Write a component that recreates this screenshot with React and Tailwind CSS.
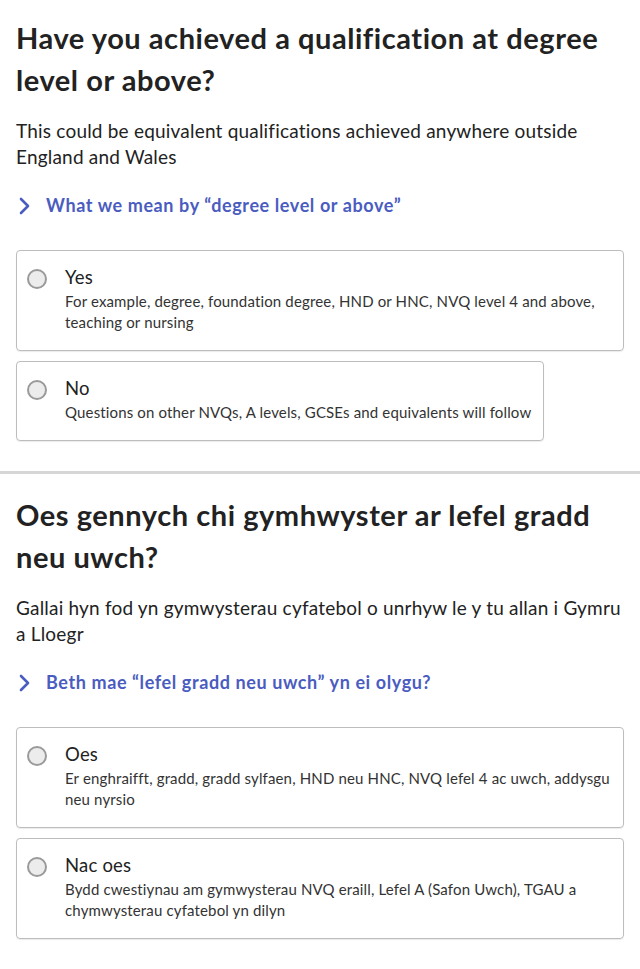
import React from 'react';

const sections = [
  {
    title: 'Have you achieved a qualification at degree level or above?',
    hint: 'This could be equivalent qualifications achieved anywhere outside England and Wales',
    more: 'What we mean by \u201cdegree level or above\u201d',
    options: [
      { label: 'Yes', desc: 'For example, degree, foundation degree, HND or HNC, NVQ level 4 and above, teaching or nursing' },
      { label: 'No', desc: 'Questions on other NVQs, A levels, GCSEs and equivalents will follow' },
    ],
  },
  {
    title: 'Oes gennych chi gymhwyster ar lefel gradd neu uwch?',
    hint: 'Gallai hyn fod yn gymwysterau cyfatebol o unrhyw le y tu allan i Gymru a Lloegr',
    more: 'Beth mae \u201clefel gradd neu uwch\u201d yn ei olygu?',
    options: [
      { label: 'Oes', desc: 'Er enghraifft, gradd, gradd sylfaen, HND neu HNC, NVQ lefel 4 ac uwch, addysgu neu nyrsio' },
      { label: 'Nac oes', desc: 'Bydd cwestiynau am gymwysterau NVQ eraill, Lefel A (Safon Uwch), TGAU a chymwysterau cyfatebol yn dilyn' },
    ],
  },
];

const Option = ({ label, desc }) => (
  <label className="flex w-fit max-w-full gap-[18px] rounded border border-[#bdbdbd] pl-[10px] pr-[12px] pt-[15px] pb-[17px] shadow-[0_1px_1px_rgba(0,0,0,0.08)]">
    <span className="mt-[3px] h-5 w-5 shrink-0 rounded-full border-2 border-[#9a9a9a] bg-[#ececec]" />
    <span className="flex flex-col">
      <span className="text-[18.5px] leading-[22px] tracking-[0.2px] text-[#222]">{label}</span>
      <span className="mt-[3px] text-[15px] leading-[21px] tracking-[0.15px] text-[#333]">{desc}</span>
    </span>
  </label>
);

const Section = ({ title, hint, more, options, top }) => (
  <section className={`px-4 pb-[30px] ${top}`}>
    <h1 className="text-[29px] font-bold leading-[42px] tracking-[0.55px] text-[#222]">{title}</h1>
    <p className="mt-[17px] text-[19px] leading-[26px] tracking-[0.2px] text-[#222]">{hint}</p>
    <div className="mt-[22px] flex items-center gap-[14px] text-[18px] font-bold tracking-[0.6px] text-[#4a5cc0]">
      <svg width="14" height="20" viewBox="0 0 14 20" fill="none" className="ml-[2px]">
        <path d="M3 3l7 7-7 7" stroke="#4a5cc0" strokeWidth="2.6" strokeLinecap="round" strokeLinejoin="round" />
      </svg>
      <span>{more}</span>
    </div>
    <div className="mt-[31px] flex flex-col gap-[10px]">
      {options.map(o => (
        <Option key={o.label} {...o} />
      ))}
    </div>
  </section>
);

export default function App() {
  return (
    <div className="min-h-screen bg-white" style={{ fontFamily: 'Lato, "Noto Sans", sans-serif' }}>
      <Section {...sections[0]} top="pt-[17px]" />
      <div className="h-[3px] bg-[#d6d6d6]" />
      <Section {...sections[1]} top="pt-[20px]" />
    </div>
  );
}
